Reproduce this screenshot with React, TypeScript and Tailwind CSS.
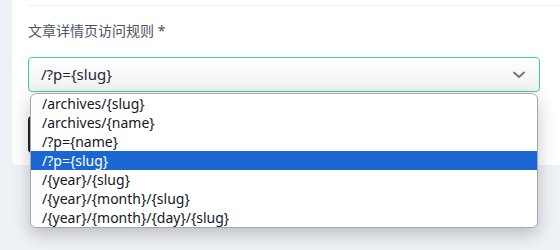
import React from "react";

const options = [
  "/archives/{slug}",
  "/archives/{name}",
  "/?p={name}",
  "/?p={slug}",
  "/{year}/{slug}",
  "/{year}/{month}/{slug}",
  "/{year}/{month}/{day}/{slug}",
];

export default function App() {
  return (
    <div
      className="w-[560px] h-[250px] overflow-hidden bg-[#eef1f5]"
      style={{ fontFamily: '"Noto Sans", "Noto Sans CJK SC", sans-serif' }}
    >
      <div className="ml-[12px] w-[600px] bg-white rounded-bl-[6px] pl-[16px] pb-[12px]">
        <div className="h-[5px]" />
        <div className="h-px w-[540px] bg-[#eff0f2]" />
        <div className="pt-[15px] text-[14px] leading-[20px] text-[#4b5563]">
          文章详情页访问规则 <span className="text-[#4b5563]">*</span>
        </div>
        <div className="relative mt-[16px] w-[512px]">
          <div className="h-[35px] rounded-[4px] border border-[#3fcf97] bg-gradient-to-b from-white to-[#f2f2f2] flex items-center pl-[12px] pr-[12px] text-[15px] text-[#1f2937]">
            <span className="flex-1">/?p={"{"}slug{"}"}</span>
            <svg width="12" height="8" viewBox="0 0 12 8" className="mr-[2px]">
              <path d="M1 1.5 L6 6 L11 1.5" fill="none" stroke="#6b7280" strokeWidth="1.8" strokeLinecap="round" strokeLinejoin="round" />
            </svg>
          </div>
          <div className="absolute left-[2px] top-[36px] w-[508px] rounded-[6px] border border-[#a8a8a8] bg-white overflow-hidden shadow-[0_6px_18px_rgba(0,0,0,0.22)] z-10">
            {options.map((o, i) => (
              <div
                key={o}
                className={
                  i === 3
                    ? "h-[19px] leading-[19px] pl-[11px] text-[14px] bg-[#1a67d3] text-white"
                    : "h-[19px] leading-[19px] pl-[11px] text-[14px] text-[#111827]"
                }
              >
                {o}
              </div>
            ))}
          </div>
        </div>
        <div className="mt-[24px] h-[37px] w-[72px] rounded-[4px] bg-[#1f2937]" />
      </div>
    </div>
  );
}
